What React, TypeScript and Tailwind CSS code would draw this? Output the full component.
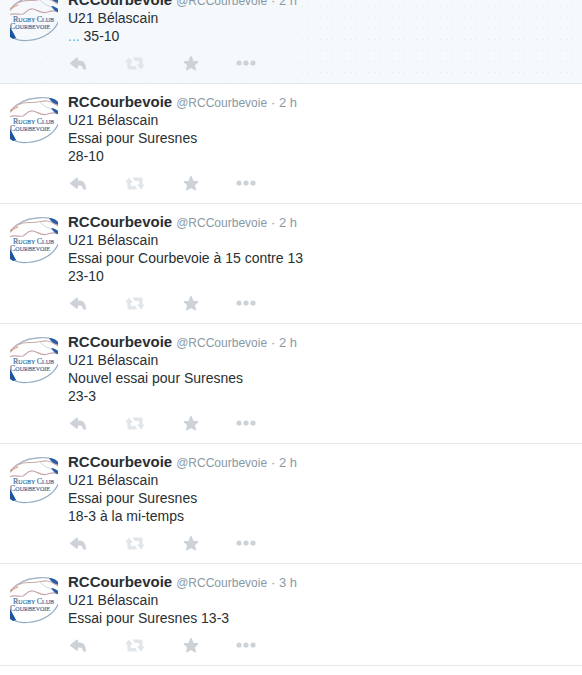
import React from "react";

type Tweet = {
  id: number;
  time: string;
  lines: string[];
  truncated?: boolean;
  highlighted?: boolean;
};

const tweets: Tweet[] = [
  { id: 1, time: "2 h", lines: ["U21 Bélascain", "35-10"], truncated: true, highlighted: true },
  { id: 2, time: "2 h", lines: ["U21 Bélascain", "Essai pour Suresnes", "28-10"] },
  { id: 3, time: "2 h", lines: ["U21 Bélascain", "Essai pour Courbevoie à 15 contre 13", "23-10"] },
  { id: 4, time: "2 h", lines: ["U21 Bélascain", "Nouvel essai pour Suresnes", "23-3"] },
  { id: 5, time: "2 h", lines: ["U21 Bélascain", "Essai pour Suresnes", "18-3 à la mi-temps"] },
  { id: 6, time: "3 h", lines: ["U21 Bélascain", "Essai pour Suresnes 13-3"] },
];

const ClubLogo = () => (
  <svg viewBox="0 0 48 48" className="block h-12 w-12 shrink-0 overflow-hidden" aria-hidden="true">
    <g fill="none" strokeLinecap="round">
      <path d="M0 15C5 8 14 2 27 1C35 0 43 1 49 6" stroke="#a3b5c6" strokeWidth="1.3" />
      <path d="M49 25C46 35 34 45 17 45.5C11 46 7 45 4 43" stroke="#93abc3" strokeWidth="1.2" />
      <path d="M0 14C5 8 13 5 21 5.5C29 6 32 3 38 4C43 5 45 8 48 9" stroke="#c9acb0" strokeWidth="1.1" />
      <path d="M0 19.5C5 18 9 20 13 19C17 17 18 13 23 14C28 15 30 18 35 17.5C40 17 42 14 48 17" stroke="#c6a5a9" strokeWidth="1.2" />
      <path d="M1 14C4 11 6 11 8 10" stroke="#dda07c" strokeWidth="1.1" />
      <path d="M30 5C35 11 39 10 44 14" stroke="#c3cbd6" strokeWidth="0.8" />
    </g>
    <path d="M39 1C43 1 46 3 48 5V8C45 7 41 5 39 1Z" fill="#285da5" />
    <path d="M41 11C44 11 47 13 48 14V17C46 17 43 14 41 11Z" fill="#285da5" />
    <path d="M0 32C2 35 4 39 6 43L3 44L0 42Z" fill="#1e54a0" />
    <g fill="#44719f" stroke="#44719f" strokeWidth="0.2" fontFamily="Liberation Serif, serif" fontSize="6">
      <text x="3" y="27">
        <tspan fontSize="8">R</tspan>UGBY <tspan fontSize="8">C</tspan>LUB
      </text>
      <text x="0" y="34">
        <tspan fontSize="8">C</tspan>OURBEVOIE
      </text>
    </g>
  </svg>
);

const ReplyIcon = () => (
  <svg viewBox="0 0 16 13" className="h-[13px] w-4" fill="currentColor" aria-hidden="true">
    <path d="M0.3 5.7L6.4 0.8Q8 0 8 1.6V3.5H9.5C13.8 3.6 16 6.6 16 12.5H13C12.8 9.6 12 8.5 9.6 8.5H8V10.6Q8 12.2 6.4 11.4L0.3 6.9Q-0.2 6.3 0.3 5.7Z" />
  </svg>
);

const RetweetIcon = () => (
  <svg viewBox="0 0 20 13" className="h-[13px] w-5" fill="currentColor" aria-hidden="true">
    <path d="M4 0.5L8.2 5.5H5.8V9H10.2L12.4 12.5H4Q2.4 12.5 2.4 11V5.5H0ZM7.6 0.5H16Q17.6 0.5 17.6 2V7.5H20L15.9 12.5L11.8 7.5H14.2V4H9.8Z" />
  </svg>
);

const StarIcon = () => (
  <svg viewBox="0 0 16 15" className="h-[15px] w-4" fill="currentColor" aria-hidden="true">
    <path d="M8 0Q8.6 0 9 1L10.5 4.9L14.6 5.1Q16 5.3 15 6.4L11.9 9.2L13 13.4Q13.2 15 11.8 14.3L8 12L4.2 14.3Q2.8 15 3 13.4L4.1 9.2L1 6.4Q0 5.3 1.4 5.1L5.5 4.9L7 1Q7.4 0 8 0Z" />
  </svg>
);

const MoreIcon = () => (
  <svg viewBox="0 0 20 6" className="h-[6px] w-5" fill="currentColor" aria-hidden="true">
    <circle cx="3" cy="3" r="2.6" />
    <circle cx="10" cy="3" r="2.6" />
    <circle cx="17" cy="3" r="2.6" />
  </svg>
);

// Faint speckle behind the highlighted tweet: scattered on the left, a grid on the right
const DotTexture = () => (
  <svg className="absolute inset-0 h-full w-full" fill="#e1e7ec" aria-hidden="true">
    <defs>
      <pattern id="scattered" width="9" height="8" patternUnits="userSpaceOnUse" patternTransform="rotate(28)">
        <circle cx="4" cy="4" r="0.6" />
      </pattern>
      <pattern id="grid" width="6" height="11" patternUnits="userSpaceOnUse">
        <rect x="2" y="2" width="1" height="1" />
      </pattern>
    </defs>
    <rect width="300" height="100%" fill="url(#scattered)" />
    <rect x="300" width="100%" height="100%" fill="url(#grid)" />
  </svg>
);

const TweetActions = () => (
  <div className="mt-2 flex h-5 items-center text-[#ccd2d8]">
    <button type="button" aria-label="Répondre" className="flex w-14 items-center pl-0.5">
      <ReplyIcon />
    </button>
    <button type="button" aria-label="Retweeter" className="flex w-14 items-center pl-px text-[#e1e6eb]">
      <RetweetIcon />
    </button>
    <button type="button" aria-label="Favori" className="flex w-14 items-center pl-[3px]">
      <StarIcon />
    </button>
    <button type="button" aria-label="Plus" className="flex items-center">
      <MoreIcon />
    </button>
  </div>
);

const TweetItem = ({ tweet }: { tweet: Tweet }) => (
  <li
    className={`relative flex gap-[10px] border-b px-[10px] pt-[9px] pb-[10px] ${
      tweet.highlighted ? "border-[#e1e8ed] bg-[#f5f9fc]" : "border-[#e5e7e9] bg-white"
    }`}
  >
    {tweet.highlighted && <DotTexture />}
    <div className="relative pt-1">
      <ClubLogo />
    </div>
    <div className="relative min-w-0 flex-1">
      <div className="flex h-[18px] items-baseline gap-1 text-[#8899a6]">
        <a href="#profile" className="text-[15px] leading-[18px] font-bold text-[#292f33]">
          RCCourbevoie
        </a>
        <a href="#profile" className="text-xs leading-[18px]">
          @RCCourbevoie
        </a>
        <span className="text-[13px] leading-[18px]">· {tweet.time}</span>
      </div>
      {tweet.lines.map((line, index) => (
        <p key={line} className="text-sm leading-[18px] text-[#292f33]">
          {tweet.truncated && index === tweet.lines.length - 1 && (
            <a href="#tweet" className="text-[#6fa8dc]">
              ...{" "}
            </a>
          )}
          {line}
        </p>
      ))}
      <TweetActions />
    </div>
  </li>
);

const App = () => {
  return (
    <main className="flow-root min-h-screen overflow-hidden bg-white font-['Liberation_Sans',Arial,sans-serif]">
      {/* the timeline is scrolled a little past its first tweet */}
      <ol className="-mt-[18px]">
        {tweets.map((tweet) => (
          <TweetItem key={tweet.id} tweet={tweet} />
        ))}
      </ol>
    </main>
  );
};

export default App;
